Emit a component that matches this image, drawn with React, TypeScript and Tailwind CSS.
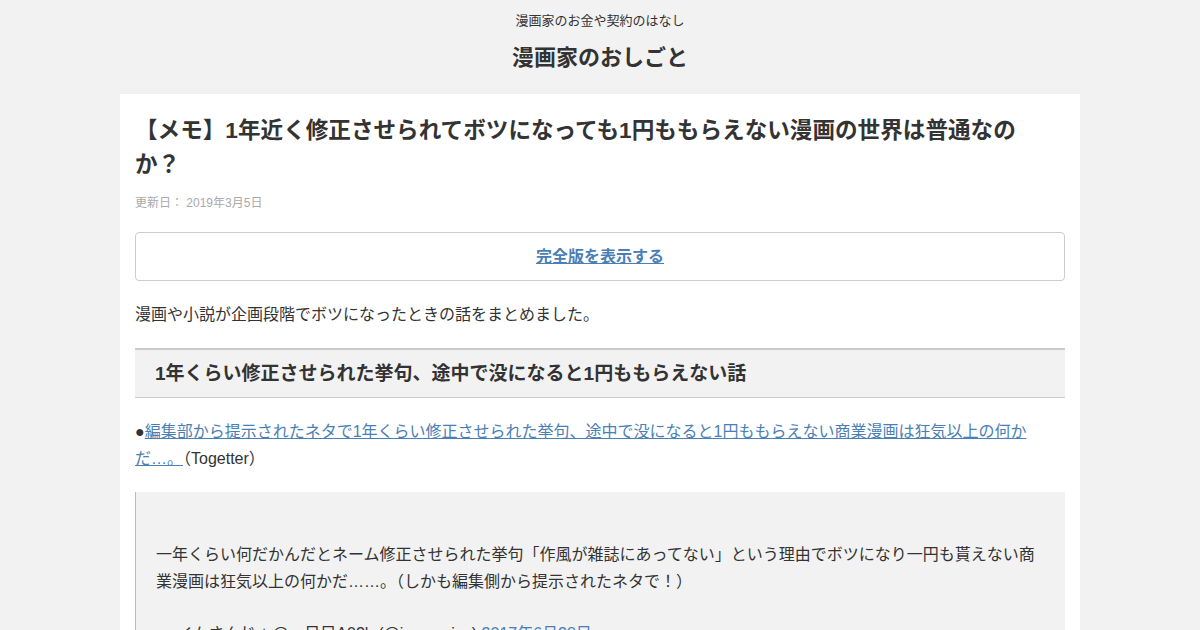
const font = "font-['Liberation_Sans','Noto_Sans_CJK_JP',sans-serif]";

export default function App() {
  return (
    <div className={`min-h-[630px] bg-[#f2f2f2] text-[#333] ${font}`}>
      {/* サイトヘッダー */}
      <header className="pt-[12px] pb-[20px] text-center">
        <p className="text-[13px] leading-[18px]">漫画家のお金や契約のはなし</p>
        <div className="mt-[12px] text-[22px] leading-[32px] font-bold">漫画家のおしごと</div>
      </header>

      <main className="mx-auto w-[960px] bg-white px-[15px] pt-[20px] pb-[40px]">
        <h1 className="pr-[30px] text-[22.6px] leading-[34px] font-bold">
          【メモ】1年近く修正させられてボツになっても1円ももらえない漫画の世界は普通なのか？
        </h1>
        <div className="mt-[12px] text-[12px] leading-[18px] text-[#aaa]">更新日： 2019年3月5日</div>

        <div className="mt-[20px] flex h-[49px] items-center justify-center rounded-[4px] border border-[#ccc]">
          <a href="#" className="text-[16px] font-bold text-[#4a7fb5] underline">
            完全版を表示する
          </a>
        </div>

        <p className="mt-[20px] text-[16px] leading-[27px]">
          漫画や小説が企画段階でボツになったときの話をまとめました。
        </p>

        <h2 className="mt-[20px] border-t-2 border-b border-t-[#ccc] border-b-[#ccc] bg-[#f2f2f2] px-[20px] py-[10px] text-[19px] leading-[27px] font-bold">
          1年くらい修正させられた挙句、途中で没になると1円ももらえない話
        </h2>

        <p className="mt-[20px] pr-[10px] text-[16px] leading-[27px]">
          ●
          <a href="#" className="text-[#4a7fb5] underline">
            編集部から提示されたネタで1年くらい修正させられた挙句、途中で没になると1円ももらえない商業漫画は狂気以上の何かだ…。
          </a>
          （Togetter）
        </p>

        <blockquote className="mt-[20px] border-l-[1.5px] border-[#bbb] bg-[#f2f2f2] pt-[49px] pr-[24px] pb-[20px] pl-[20px] text-[16px] leading-[27px]">
          <p>
            一年くらい何だかんだとネーム修正させられた挙句「作風が雑誌にあってない」という理由でボツになり一円も貰えない商業漫画は狂気以上の何かだ……。（しかも編集側から提示されたネタで！）
          </p>
          <p className="mt-[25px]">
            — イムさんじょ@一日目A02b (@imusanjyo){' '}
            <a href="#" className="text-[#4a7fb5]">
              2017年6月28日
            </a>
          </p>
        </blockquote>
      </main>
    </div>
  );
}
